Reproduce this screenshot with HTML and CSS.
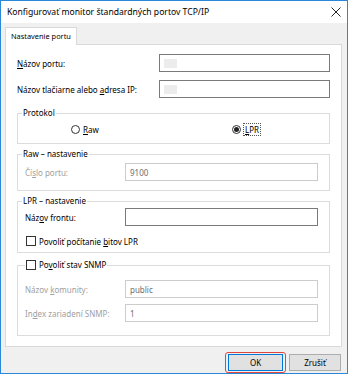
FILE: index.html
```html
<!DOCTYPE html>
<html lang="sk">
<head>
  <meta charset="UTF-8" />
  <title>Konfigurovať monitor štandardných portov TCP/IP</title>
  <link rel="stylesheet" href="styles.css">
</head>
<body>

  <div class="window">
    <div class="titlebar">
      <span class="title">Konfigurovať monitor štandardných portov TCP/IP</span>
      <svg class="close" width="10" height="10" viewBox="0 0 10 10">
        <path d="M0.5 0.5 L9.5 9.5 M9.5 0.5 L0.5 9.5" stroke="#222" stroke-width="1" fill="none" />
      </svg>
    </div>

    <div class="body">
      <div class="tabs">
        <div class="tab">Nastavenie portu</div>
      </div>

      <div class="panel">
        <div class="row">
          <label class="label-wide"><u>N</u>ázov portu:</label>
          <div class="input wide"><span class="blur"></span></div>
        </div>
        <div class="row second">
          <label class="label-wide">Názov tlačiarne alebo <u>a</u>dresa IP:</label>
          <div class="input wide"><span class="blur"></span></div>
        </div>

        <fieldset class="group protocol">
          <legend>Protokol</legend>
          <div class="radios">
            <span class="radio"><span class="dot"></span><span><u>R</u>aw</span></span>
            <span class="radio"><span class="dot checked"></span><span class="focus"><u>L</u>PR</span></span>
          </div>
        </fieldset>

        <fieldset class="group raw">
          <legend>Raw – nastavenie</legend>
          <div class="row">
            <label class="label-narrow disabled">Čí<u>s</u>lo portu:</label>
            <div class="input narrow off">9100</div>
          </div>
        </fieldset>

        <fieldset class="group lpr">
          <legend>LPR – nastavenie</legend>
          <div class="row">
            <label class="label-narrow">Náz<u>o</u>v frontu:</label>
            <div class="input narrow"></div>
          </div>
          <div class="check-row">
            <span class="box"></span><span>Povoliť počítanie <u>b</u>itov LPR</span>
          </div>
        </fieldset>

        <fieldset class="group snmp">
          <legend><span class="box"></span>Po<u>v</u>oliť stav SNMP</legend>
          <div class="row">
            <label class="label-narrow disabled">Názov <u>k</u>omunity:</label>
            <div class="input narrow off">public</div>
          </div>
          <div class="row gap">
            <label class="label-narrow disabled">In<u>d</u>ex zariadení SNMP:</label>
            <div class="input narrow off">1</div>
          </div>
        </fieldset>
      </div>

      <div class="buttons">
        <span class="highlight"><button class="btn default">OK</button></span>
        <button class="btn">Zrušiť</button>
      </div>
    </div>
  </div>

</body>
</html>
```

FILE: styles.css
```css
body {
  margin: 0;
  font-family: 'Noto Sans', sans-serif;
  font-size: 8px;
  color: #000;
}
.window {
  width: 348px;
  height: 374px;
  box-sizing: border-box;
  border: 1px solid #2b88d8;
  background: #f0f0f0;
  display: flex;
  flex-direction: column;
}
.titlebar {
  height: 22px;
  background: #fff;
  display: flex;
  align-items: center;
  justify-content: space-between;
  padding: 0 6px 0 6px;
}
.title {
  font-size: 8.6px;
}
.body {
  flex: 1;
  padding: 4px 5px 0 4px;
  display: flex;
  flex-direction: column;
}
.tabs {
  display: flex;
  height: 17px;
}
.tab {
  width: 72px;
  box-sizing: border-box;
  height: 18px;
  border: 1px solid #d9d9d9;
  border-bottom: none;
  background: #fff;
  padding: 3px 0 0 5px;
  font-size: 7.4px;
  white-space: nowrap;
  position: relative;
  z-index: 1;
}
.panel {
  height: 303px;
  box-sizing: border-box;
  background: #fff;
  border: 1px solid #d9d9d9;
  padding: 9px 11px 0 11px;
}
.row {
  display: flex;
  align-items: center;
  height: 18px;
}
.row.second {
  margin-top: 8px;
}
.row.gap {
  margin-top: 6px;
}
.label-wide {
  width: 142px;
}
.label-narrow {
  width: 100px;
}
.disabled {
  color: #a0a0a0;
}
.input {
  height: 18px;
  box-sizing: border-box;
  border: 1px solid #7a7a7a;
  background: #fff;
  padding: 0 4px;
  display: flex;
  align-items: center;
}
.input.wide {
  width: 171px;
}
.input.narrow {
  width: 193px;
}
.input.off {
  border-color: #cccccc;
  color: #6d6d6d;
}
.blur {
  width: 13px;
  height: 9px;
  background: #ececec;
}
.group {
  margin: 4px 0 0 0;
  padding: 0 0 0 7px;
  border: 1px solid #dcdcdc;
  width: 313px;
  box-sizing: border-box;
}
.group legend {
  padding: 0 1px;
  margin-left: -3px;
  line-height: 12px;
  height: 12px;
}
.protocol {
  margin-top: 9px;
  padding-top: 4px;
  padding-bottom: 8px;
}
.radios {
  display: grid;
  grid-template-columns: 161px 1fr;
  padding-left: 46px;
  height: 12px;
  align-items: center;
}
.radio {
  display: flex;
  align-items: center;
}
.dot {
  width: 9px;
  height: 9px;
  box-sizing: border-box;
  border: 1px solid #333;
  border-radius: 50%;
  margin-right: 3px;
  display: flex;
  align-items: center;
  justify-content: center;
}
.dot.checked::after {
  content: "";
  width: 5px;
  height: 5px;
  border-radius: 50%;
  background: #222;
}
.focus {
  outline: 1px dotted #555;
  padding: 0 1px;
}
.raw {
  padding-top: 3px;
  padding-bottom: 9px;
}
.lpr {
  padding-top: 1px;
  padding-bottom: 5px;
}
.check-row {
  display: flex;
  align-items: center;
  height: 12px;
  margin-top: 9px;
  padding-left: 1px;
}
.box {
  width: 10px;
  height: 10px;
  box-sizing: border-box;
  border: 1px solid #333;
  background: #fff;
  margin-right: 3px;
  display: inline-block;
  vertical-align: -2px;
}
.snmp {
  margin-top: 6px;
  padding-top: 9px;
  padding-bottom: 13px;
}
.snmp legend {
  padding-left: 1px;
  margin-left: 0;
}
.buttons {
  display: flex;
  justify-content: flex-end;
  align-items: center;
  gap: 3px;
  margin-top: 5px;
  padding-right: 1px;
}
.highlight {
  border: 1.5px solid #e0453c;
  border-radius: 3px;
  padding: 1px 2px;
  display: flex;
}
.btn {
  height: 17px;
  background: #e1e1e1;
  border: 1px solid #adadad;
  font-family: 'Noto Sans', sans-serif;
  font-size: 8px;
  padding: 0;
  width: 52px;
}
.btn.default {
  border-color: #0078d7;
  width: 55px;
}
```
